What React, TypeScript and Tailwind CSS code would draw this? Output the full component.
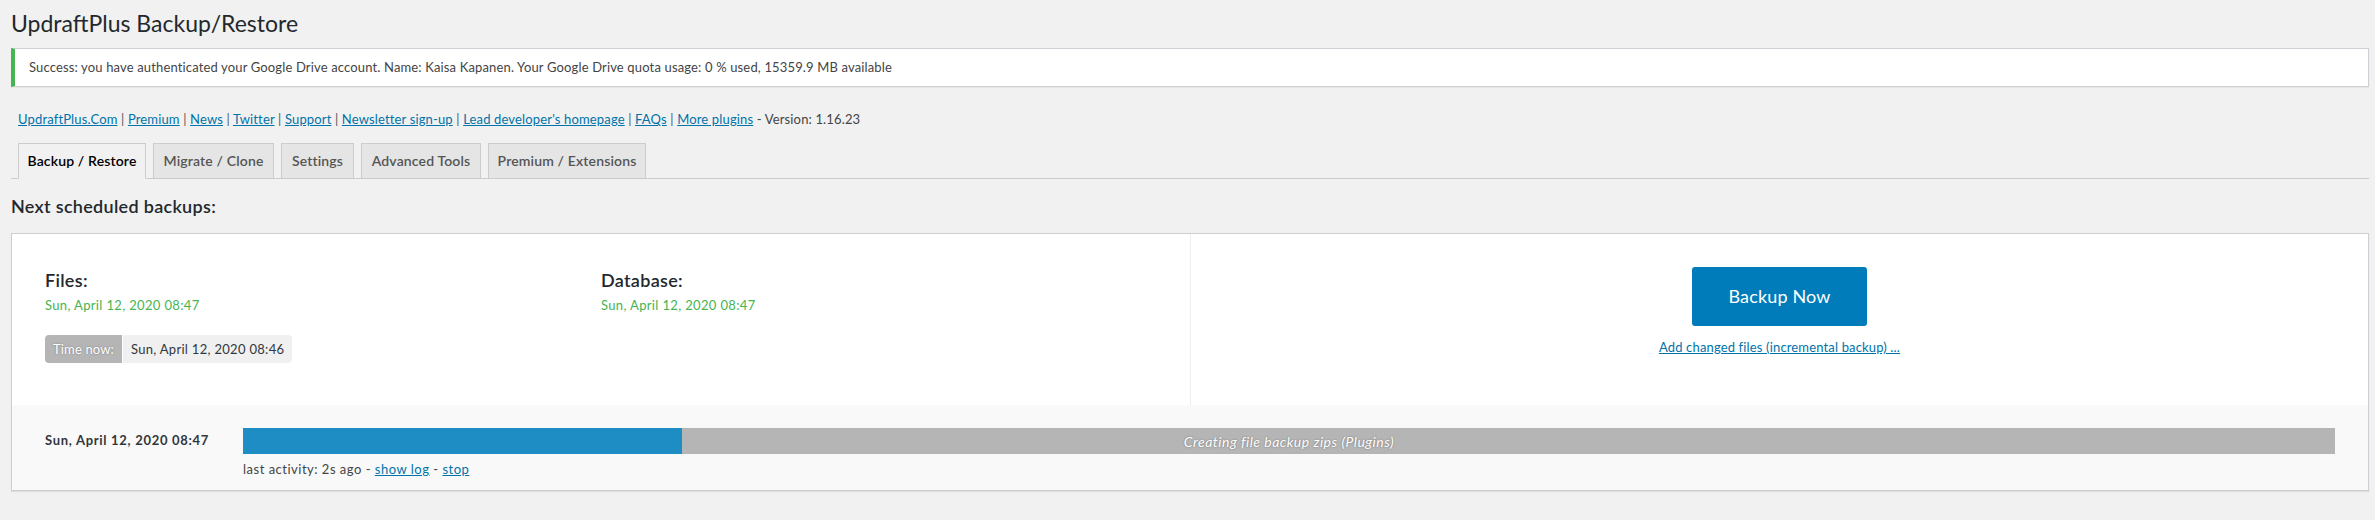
import React from 'react';

const links = [
  'UpdraftPlus.Com',
  'Premium',
  'News',
  'Twitter',
  'Support',
  'Newsletter sign-up',
  "Lead developer's homepage",
  'FAQs',
  'More plugins',
];

const tabs = [
  { label: 'Backup / Restore', w: 'w-[128px]', active: true },
  { label: 'Migrate / Clone', w: 'w-[121px]', active: false },
  { label: 'Settings', w: 'w-[73px]', active: false },
  { label: 'Advanced Tools', w: 'w-[120px]', active: false },
  { label: 'Premium / Extensions', w: 'w-[158px]', active: false },
];

export default function App() {
  return (
    <div className="min-h-[520px] bg-[#f1f1f1] pl-[11px] pr-[6px] pt-[9px] font-['Lato','Liberation_Sans',sans-serif] text-[13px] tracking-[0.15px] text-[#444]">
      {/* Title */}
      <h1 className="text-[23px] leading-[29px] font-normal tracking-normal text-[#23282d]">UpdraftPlus Backup/Restore</h1>

      {/* Notice */}
      <div className="mt-[10px] flex h-[39px] items-center border border-[#ccd0d4] border-l-4 border-l-[#46b450] bg-white pl-[14px] shadow-[0_1px_1px_rgba(0,0,0,0.04)]">
        <p className="leading-[19px]">
          Success: you have authenticated your Google Drive account. Name: Kaisa Kapanen. Your Google Drive quota usage: 0 % used, 15359.9 MB available
        </p>
      </div>

      {/* Links */}
      <div className="mt-[23px] h-[19px] pl-[7px] leading-[19px]">
        {links.map((l, i) => (
          <React.Fragment key={l}>
            {i > 0 && <span className="text-[#50575e]"> | </span>}
            <a href="#" className="text-[#0073aa] underline">{l}</a>
          </React.Fragment>
        ))}
        <span> - Version: 1.16.23</span>
      </div>

      {/* Tabs */}
      <div className="mt-[14px] flex h-[36px] gap-[7px] border-b border-[#ccc] pl-[7px]">
        {tabs.map((t) => (
          <div
            key={t.label}
            className={`flex h-[36px] items-center justify-center border border-[#ccc] text-[14px] font-semibold leading-[20px] ${t.w} ${
              t.active ? 'border-b-[#f1f1f1] bg-[#f1f1f1] text-black' : 'bg-[#e5e5e5] text-[#555]'
            }`}
          >
            {t.label}
          </div>
        ))}
      </div>

      {/* Heading */}
      <h2 className="mt-[16px] text-[18px] font-semibold leading-[22px] tracking-[0.3px] text-[#23282d]">Next scheduled backups:</h2>

      {/* Main box */}
      <div className="mt-[16px] border border-[#ccd0d4] shadow-[0_1px_1px_rgba(0,0,0,0.08)]">
        <div className="flex h-[171px] bg-white">
          <div className="grid w-[1178px] grid-cols-2 px-[33px] pt-[35px]">
            <div>
              <h3 className="text-[18px] font-semibold leading-[22px] tracking-[0.3px] text-[#23282d]">Files:</h3>
              <div className="mt-[5px] leading-[19px] tracking-[0.35px] text-[#46b450]">Sun, April 12, 2020 08:47</div>
              <div className="mt-[20px] flex h-[28px] items-stretch leading-[28px]">
                <span className="rounded-l-[4px] bg-[#b5b5b5] px-[8px] text-white [text-shadow:0_0_2px_rgba(0,0,0,0.35)]">Time now:</span>
                <span className="ml-px rounded-r-[4px] bg-[#f0f0f0] px-[8px] tracking-[0.3px] text-[#32373c]">Sun, April 12, 2020 08:46</span>
              </div>
            </div>
            <div>
              <h3 className="text-[18px] font-semibold leading-[22px] tracking-[0.3px] text-[#23282d]">Database:</h3>
              <div className="mt-[5px] leading-[19px] tracking-[0.35px] text-[#46b450]">Sun, April 12, 2020 08:47</div>
            </div>
          </div>
          <div className="flex flex-1 flex-col items-center border-l border-[#eee] pt-[33px]">
            <button className="h-[59px] w-[175px] rounded-[3px] bg-[#007cba] text-[18px] text-white">Backup Now</button>
            <a href="#" className="mt-[12px] leading-[19px] text-[#0073aa] underline">Add changed files (incremental backup) ...</a>
          </div>
        </div>

        <div className="bg-[#f9f9f9] pl-[33px] pr-[33px] pt-[23px] pb-[12px]">
          <div className="flex items-center">
            <div className="w-[198px] font-bold tracking-[0.7px] text-[#32373c]">Sun, April 12, 2020 08:47</div>
            <div className="relative h-[26px] flex-1 bg-[#b5b5b5]">
              <div className="h-full w-[21%] bg-[#1e8dc3]" />
              <div className="absolute inset-0 flex items-center justify-center text-[14px] italic tracking-[0.5px] text-white [text-shadow:0_0_2px_rgba(0,0,0,0.4)]">
                Creating file backup zips (Plugins)
              </div>
            </div>
          </div>
          <div className="ml-[198px] mt-[6px] leading-[18px] tracking-[0.5px]">
            last activity: 2s ago - <a href="#" className="text-[#0073aa] underline">show log</a> - <a href="#" className="text-[#0073aa] underline">stop</a>
          </div>
        </div>
      </div>
    </div>
  );
}
